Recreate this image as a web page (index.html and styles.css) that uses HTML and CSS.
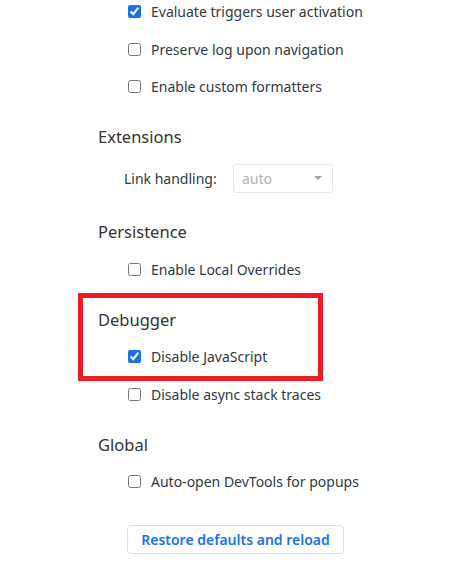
FILE: index.html
```html
<!DOCTYPE html>
<html>
<head>
<meta charset="utf-8">
<link rel="stylesheet" href="styles.css">
</head>
<body>
<div class="page">
  <section class="section first">
    <label class="row"><input type="checkbox" checked><span>Evaluate triggers user activation</span></label>
    <label class="row"><input type="checkbox"><span>Preserve log upon navigation</span></label>
    <label class="row"><input type="checkbox"><span>Enable custom formatters</span></label>
  </section>

  <section class="section">
    <h2 class="heading">Extensions</h2>
    <div class="row select-row">
      <span class="select-label">Link handling:</span>
      <div class="select">
        <span>auto</span>
        <span class="arrow"></span>
      </div>
    </div>
  </section>

  <section class="section">
    <h2 class="heading">Persistence</h2>
    <label class="row"><input type="checkbox"><span>Enable Local Overrides</span></label>
  </section>

  <section class="section">
    <div class="highlight">
      <h2 class="heading">Debugger</h2>
      <label class="row"><input type="checkbox" checked><span>Disable JavaScript</span></label>
    </div>
    <label class="row"><input type="checkbox"><span>Disable async stack traces</span></label>
  </section>

  <section class="section">
    <h2 class="heading">Global</h2>
    <label class="row"><input type="checkbox"><span>Auto-open DevTools for popups</span></label>
  </section>

  <div class="actions">
    <button class="restore">Restore defaults and reload</button>
  </div>
</div>
</body>
</html>
```
FILE: styles.css
```css
html, body {
  margin: 0;
  padding: 0;
  background: #ffffff;
}

body {
  font-family: "Noto Sans", "Open Sans", "Liberation Sans", sans-serif;
  color: #303942;
  font-size: 14px;
}

.page {
  padding-left: 98px;
  margin-top: -7px;
}

.section {
  display: flex;
  flex-direction: column;
  margin-top: 12.5px;
}

.section.first {
  margin-top: 0;
}

.heading {
  margin: 0;
  height: 37.5px;
  display: flex;
  align-items: center;
  font-size: 16.5px;
  font-weight: 400;
  color: #333333;
}

.row {
  height: 37.5px;
  display: flex;
  align-items: center;
  padding-left: 30px;
  color: #303942;
}

.row input[type="checkbox"] {
  width: 13px;
  height: 13px;
  margin: 0 10px 0 0;
  accent-color: #1a73e8;
}

.select-row {
  height: 45px;
  padding-left: 26px;
}

.select-label {
  width: 109px;
}

.select {
  box-sizing: border-box;
  width: 100px;
  height: 29px;
  border: 1px solid #e6e6e6;
  border-radius: 3px;
  display: flex;
  align-items: center;
  justify-content: space-between;
  padding: 0 10px 0 8px;
  color: #b0b0b0;
}

.arrow {
  width: 0;
  height: 0;
  border-left: 4px solid transparent;
  border-right: 4px solid transparent;
  border-top: 4px solid #a0a0a0;
}

.highlight {
  position: relative;
  display: flex;
  flex-direction: column;
}

.highlight::after {
  content: "";
  position: absolute;
  left: -20px;
  top: -8px;
  width: 245px;
  bottom: -5px;
  box-sizing: border-box;
  border: 5px solid #ed1c24;
  pointer-events: none;
}

.actions {
  padding-left: 29px;
  margin-top: 24px;
}

.restore {
  box-sizing: border-box;
  width: 217px;
  height: 29px;
  background: #ffffff;
  border: 1px solid #dadce0;
  border-radius: 4px;
  color: #1a73e8;
  font-family: inherit;
  font-size: 14px;
  font-weight: 600;
  padding: 0;
}
```
